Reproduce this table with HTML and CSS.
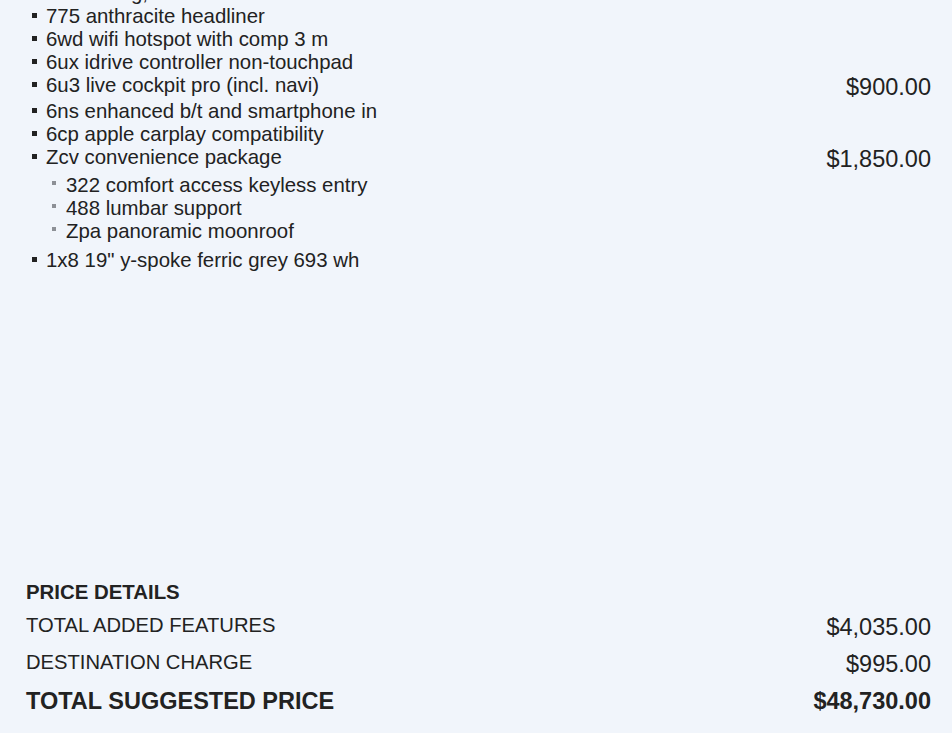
FILE: index.html
```html
<!DOCTYPE html>
<html lang="en">
<head>
<meta charset="utf-8">
<title>Build summary</title>
<link rel="stylesheet" href="styles.css">
</head>
<body>
<div class="sheet">
  <ul class="features">
    <li class="item"><span class="name">Kfl heating, front seats</span></li>
    <li class="item"><span class="name">775 anthracite headliner</span></li>
    <li class="item"><span class="name">6wd wifi hotspot with comp 3 m</span></li>
    <li class="item"><span class="name">6ux idrive controller non-touchpad</span></li>
    <li class="item"><span class="name">6u3 live cockpit pro (incl. navi)</span><span class="price">$900.00</span></li>
    <li class="item"><span class="name">6ns enhanced b/t and smartphone in</span></li>
    <li class="item"><span class="name">6cp apple carplay compatibility</span></li>
    <li class="group">
      <div class="item"><span class="name">Zcv convenience package</span><span class="price">$1,850.00</span></div>
      <ul class="sub">
        <li class="sub-item">322 comfort access keyless entry</li>
        <li class="sub-item">488 lumbar support</li>
        <li class="sub-item">Zpa panoramic moonroof</li>
      </ul>
    </li>
    <li class="item"><span class="name">1x8 19" y-spoke ferric grey 693 wh</span></li>
  </ul>

  <section class="summary">
    <h2 class="summary-title">PRICE DETAILS</h2>
    <div class="sum-row"><span class="sum-label">TOTAL ADDED FEATURES</span><span class="sum-price">$4,035.00</span></div>
    <div class="sum-row"><span class="sum-label">DESTINATION CHARGE</span><span class="sum-price">$995.00</span></div>
    <div class="sum-row total"><span class="sum-label">TOTAL SUGGESTED PRICE</span><span class="sum-price">$48,730.00</span></div>
  </section>
</div>
</body>
</html>
```

FILE: styles.css
```css
html, body {
  margin: 0;
  padding: 0;
  background: #f1f5fb;
}

body {
  font-family: "Liberation Sans", Arial, sans-serif;
  color: #222222;
  overflow: hidden;
}

.sheet {
  margin-top: -18px;
  height: calc(100vh + 18px);
  box-sizing: border-box;
  padding: 0 21px 13px 26px;
  display: flex;
  flex-direction: column;
}

.features {
  list-style: none;
  margin: 0;
  padding: 0;
  font-size: 20.4px;
  line-height: 23px;
}

.item {
  display: flex;
  align-items: flex-start;
}

.item::before {
  content: "";
  flex: none;
  width: 5px;
  height: 5px;
  background: #222222;
  margin: 8px 9px 0 6px;
}

.name {
  flex: 1;
  white-space: nowrap;
}

.price {
  font-size: 23.5px;
  line-height: 26px;
  white-space: nowrap;
  margin-left: auto;
}

.sub {
  list-style: none;
  margin: 2px 0 6px;
  padding: 0;
}

.sub-item {
  display: flex;
  align-items: flex-start;
  white-space: nowrap;
}

.sub-item::before {
  content: "";
  flex: none;
  width: 4px;
  height: 4px;
  background: #8d9096;
  margin: 7px 10px 0 26px;
}

.summary {
  margin-top: auto;
}

.summary-title {
  margin: 0 0 5px;
  font-size: 20.4px;
  line-height: 23px;
  font-weight: bold;
}

.sum-row {
  display: flex;
  justify-content: space-between;
  align-items: flex-start;
  padding: 5px 0;
}

.sum-label {
  font-size: 20.2px;
  line-height: 23px;
}

.sum-price {
  font-size: 23.5px;
  line-height: 27px;
}

.total .sum-label {
  font-size: 23.5px;
  line-height: 27px;
  font-weight: bold;
}

.total .sum-price {
  font-weight: bold;
}
```
